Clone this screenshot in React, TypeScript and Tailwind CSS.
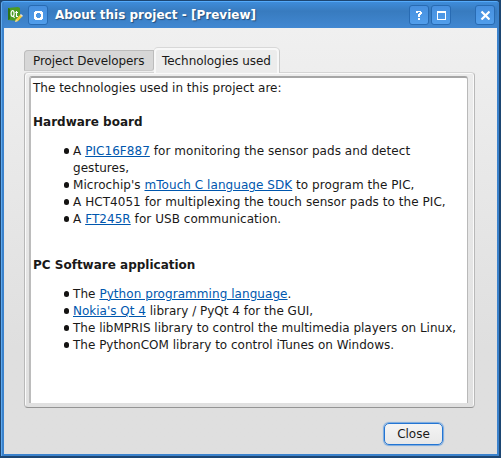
import type { ReactNode } from "react";

const Link = ({ children }: { children: ReactNode }) => (
  <a className="text-[#0057ae] underline decoration-1 underline-offset-1">{children}</a>
);

const Item = ({ children }: { children: ReactNode }) => (
  <li className="flex">
    <span className="mt-[5px] mr-[4px] size-[5.5px] shrink-0 rounded-full bg-[#141312]" />
    <div className="whitespace-nowrap">{children}</div>
  </li>
);

const TitleButton = ({ children }: { children: ReactNode }) => (
  <button className="flex size-[20px] shrink-0 items-center justify-center rounded-[3px] border border-[#286bb3] bg-gradient-to-b from-[#4790df] to-[#519eeb]">
    {children}
  </button>
);

function QtIcon() {
  return (
    <svg width="16" height="16" viewBox="0 0 16 16">
      <path d="M0 1 L10 0 L12 1 V13 L10 14 L0 13Z" fill="#4c9b23" />
      <path d="M0 1 L2 2 V12 L0 13Z" fill="#2e7415" />
      <ellipse cx="4.6" cy="6.6" rx="1.5" ry="2.9" fill="none" stroke="#fff" strokeWidth="1.2" />
      <path d="M5 8.5 L6.5 11 M8.5 4 V9.5 H10 M7.3 5.5 H10" fill="none" stroke="#fff" strokeWidth="1.1" />
      <path d="M7 15 L8 12.3 L12.5 7.5 L14.5 9.3 L10 14Z" fill="#f4cd3c" />
      <path d="M12 8 L13 7 L15 8.8 L14 9.8Z" fill="#e8dfd6" />
      <path d="M7 15 L8 12.3 L10 14Z" fill="#ead7a2" />
    </svg>
  );
}

export default function App() {
  return (
    <div className="h-[458px] w-[501px] bg-[#1d4672] pt-px pr-[2px] pb-[2px] pl-px font-['DejaVu_Sans',sans-serif] text-[12px] leading-[17px] text-[#1a1918]">
      <div className="flex h-full flex-col rounded-t-[3px] border-t border-l border-t-[#55aafa] border-l-[#60a9ed] bg-[#3b82cc] pr-[2px] pb-[2px] pl-[2px]">
        <header className="flex h-[26px] shrink-0 items-center bg-gradient-to-b from-[#3e8cda] via-[#387bbf] via-35% to-[#4188d2] pr-[2px] pl-[4px]">
          <QtIcon />
          <div className="ml-[4px]">
            <TitleButton>
              <svg width="10" height="10" viewBox="0 0 10 10" shapeRendering="crispEdges">
                <path d="M2 1H9V2H10V9H9V10H2V9H1V2H2Z M4 3V4H3V7H4V8H7V7H8V4H7V3Z" fill="#fff" fillRule="evenodd" />
              </svg>
            </TitleButton>
          </div>
          <h1 className="mt-px ml-[7px] grow tracking-[0.02px] font-bold whitespace-nowrap text-white [text-shadow:1px_1px_1px_#244e7b]">About this project - [Preview]</h1>
          <div className="flex gap-[2px]">
            <TitleButton>
              <svg width="8" height="10" viewBox="0 0 8 10" shapeRendering="crispEdges">
                <path d="M1 1H6V2H7V4H6V5H5V7H3V4H4V3H5V2H3V3H1Z M3 8H5V10H3Z" fill="#fff" />
              </svg>
            </TitleButton>
            <TitleButton>
              <svg width="10" height="10" viewBox="0 0 10 10" shapeRendering="crispEdges">
                <path d="M1 1H10V10H1Z M2 3V9H9V3Z" fill="#fff" fillRule="evenodd" />
              </svg>
            </TitleButton>
          </div>
          <div className="ml-[24px]">
            <TitleButton>
              <svg width="10" height="10" viewBox="0 0 10 10">
                <path d="M1.5 1.5 L9.5 9.5 M9.5 1.5 L1.5 9.5" stroke="#fff" strokeWidth="2.2" />
              </svg>
            </TitleButton>
          </div>
        </header>
        <main className="flex grow flex-col bg-gradient-to-b from-[#f0f0f0] to-[#dfdfdf] to-75% pt-[20px] pl-[20px]">
          <div className="flex h-[24px] items-end">
            <div className="mb-px h-[21px] w-[130px] rounded-tl-[4px] rounded-br-[3px] border border-[#bcbcbc] border-b-[#cacaca] bg-[#d7d7d7] pt-[2px] pl-[8px] tracking-[-0.08px] whitespace-nowrap">Project Developers</div>
            <div className="z-10 -mb-px h-[25px] w-[125px] rounded-t-[4px] border-2 border-b-0 border-[#f8f8f8] bg-[#ececec] pt-[3px] pl-[6px] tracking-[-0.05px] whitespace-nowrap shadow-[0_-1px_0_#d8d8d8,1px_0_0_#cccccc]">Technologies used</div>
          </div>
          <div className="h-[336px] w-[451px] rounded-[4px] border border-t-[#d4d4d4] border-r-[#b8b8b8] border-b-[#949494] border-l-[#b8b8b8] bg-gradient-to-b from-[#ececec] to-[#e0e0e0] pt-[3px] pr-[6px] pl-[4px] shadow-[inset_1px_1px_0_#fafafa,inset_-1px_0_0_#fafafa]">
            <div className="h-[327px] rounded-t-[3px] border-t-2 border-r border-l-2 border-t-[#a6a6a6] border-r-[#b9b9b9] border-l-[#bcbcbc] bg-white pt-[2px] pl-[2px]">
              <p>The technologies used in this project are:</p>
              <h2 className="mt-[17px] font-bold">Hardware board</h2>
              <ul className="mt-[12px] pl-[30.5px] tracking-[0.055px]">
                <Item>A <Link>PIC16F887</Link> for monitoring the sensor pads and detect<br />gestures,</Item>
                <Item>Microchip's <Link>mTouch C language SDK</Link> to program the PIC,</Item>
                <Item>A HCT4051 for multiplexing the touch sensor pads to the PIC,</Item>
                <Item>A <Link>FT245R</Link> for USB communication.</Item>
              </ul>
              <h2 className="mt-[29px] font-bold">PC Software application</h2>
              <ul className="mt-[12px] pl-[30.5px]">
                <Item><span className="tracking-[0.06px]">The <Link>Python programming language</Link>.</span></Item>
                <Item><Link>Nokia's Qt 4</Link> library / PyQt 4 for the GUI,</Item>
                <Item>The libMPRIS library to control the multimedia players on Linux,</Item>
                <Item>The PythonCOM library to control iTunes on Windows.</Item>
              </ul>
            </div>
          </div>
          <button className="mt-[15px] ml-[360px] h-[22px] w-[59px] rounded-[5px] border border-[#2375d3] bg-gradient-to-b from-[#f4f4f4] to-[#e8e8e8] leading-[20px] shadow-[0_0_1px_1px_#78a9df]">Close</button>
        </main>
      </div>
    </div>
  );
}
